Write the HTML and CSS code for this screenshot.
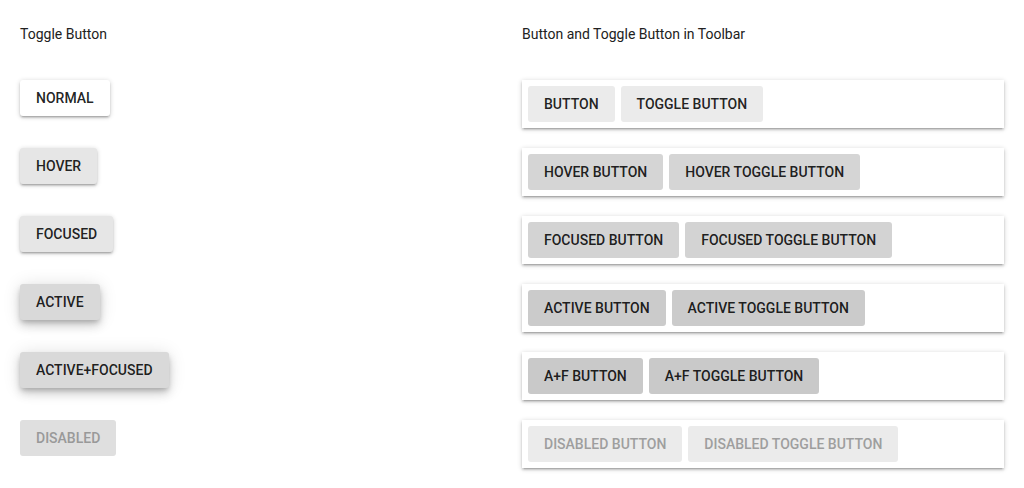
FILE: index.html
```html
<!DOCTYPE html>
<html>
<head>
<meta charset="utf-8">
<link rel="stylesheet" href="styles.css">
</head>
<body>
<div class="page">
  <section class="col">
    <h2 class="title">Toggle Button</h2>
    <div class="row"><button class="tb normal">Normal</button></div>
    <div class="row"><button class="tb hover">Hover</button></div>
    <div class="row"><button class="tb focused">Focused</button></div>
    <div class="row"><button class="tb active">Active</button></div>
    <div class="row"><button class="tb active">Active+Focused</button></div>
    <div class="row"><button class="tb disabled">Disabled</button></div>
  </section>
  <section class="col">
    <h2 class="title">Button and Toggle Button in Toolbar</h2>
    <div class="row toolbar"><button class="fb">Button</button><button class="fb">Toggle Button</button></div>
    <div class="row toolbar"><button class="fb hover">Hover Button</button><button class="fb hover">Hover Toggle Button</button></div>
    <div class="row toolbar"><button class="fb focused">Focused Button</button><button class="fb focused">Focused Toggle Button</button></div>
    <div class="row toolbar"><button class="fb active">Active Button</button><button class="fb active">Active Toggle Button</button></div>
    <div class="row toolbar"><button class="fb af">A+F Button</button><button class="fb af">A+F Toggle Button</button></div>
    <div class="row toolbar"><button class="fb disabled">Disabled Button</button><button class="fb disabled">Disabled Toggle Button</button></div>
  </section>
</div>
</body>
</html>
```
FILE: styles.css
```css
* { box-sizing: border-box; }
html, body { margin: 0; padding: 0; background: #fff; }
body { font-family: Roboto, "Liberation Sans", sans-serif; color: #212121; }
.page {
  display: grid;
  grid-template-columns: 1fr 1fr;
  column-gap: 20px;
  padding: 20px;
}
.col { display: flex; flex-direction: column; gap: 20px; }
.title {
  margin: 0;
  height: 40px;
  font-size: 14px;
  font-weight: 400;
  line-height: 28px;
  color: #212121;
}
.row { height: 48px; display: flex; align-items: flex-start; }
button {
  font-family: Roboto, "Liberation Sans", sans-serif;
  font-size: 14px;
  font-weight: 500;
  text-transform: uppercase;
  height: 36px;
  line-height: 36px;
  padding: 0 16px;
  border: 0;
  border-radius: 3px;
  color: rgba(0,0,0,.87);
  cursor: pointer;
  white-space: nowrap;
}
.tb {
  background: #fff;
  box-shadow: 0 2px 2px 0 rgba(0,0,0,.14), 0 3px 1px -2px rgba(0,0,0,.12), 0 1px 5px 0 rgba(0,0,0,.2);
}
.tb.hover, .tb.focused { background: #e6e6e6; }
.tb.active {
  background: #d9d9d9;
  box-shadow: 0 6px 10px 0 rgba(0,0,0,.14), 0 1px 18px 0 rgba(0,0,0,.12), 0 3px 5px -1px rgba(0,0,0,.2);
}
.tb.disabled { background: #dfdfdf; color: #999; box-shadow: none; }
.toolbar {
  background: #fff;
  padding: 6px;
  gap: 6px;
  box-shadow: 0 2px 2px 0 rgba(0,0,0,.14), 0 3px 1px -2px rgba(0,0,0,.12), 0 1px 5px 0 rgba(0,0,0,.2);
}
.fb { background: #ebebeb; }
.fb.hover { background: #d5d5d5; }
.fb.focused { background: #d3d3d3; }
.fb.active { background: #cbcbcb; }
.fb.af { background: #c9c9c9; }
.fb.disabled { background: #ebebeb; color: #9e9e9e; }
```
